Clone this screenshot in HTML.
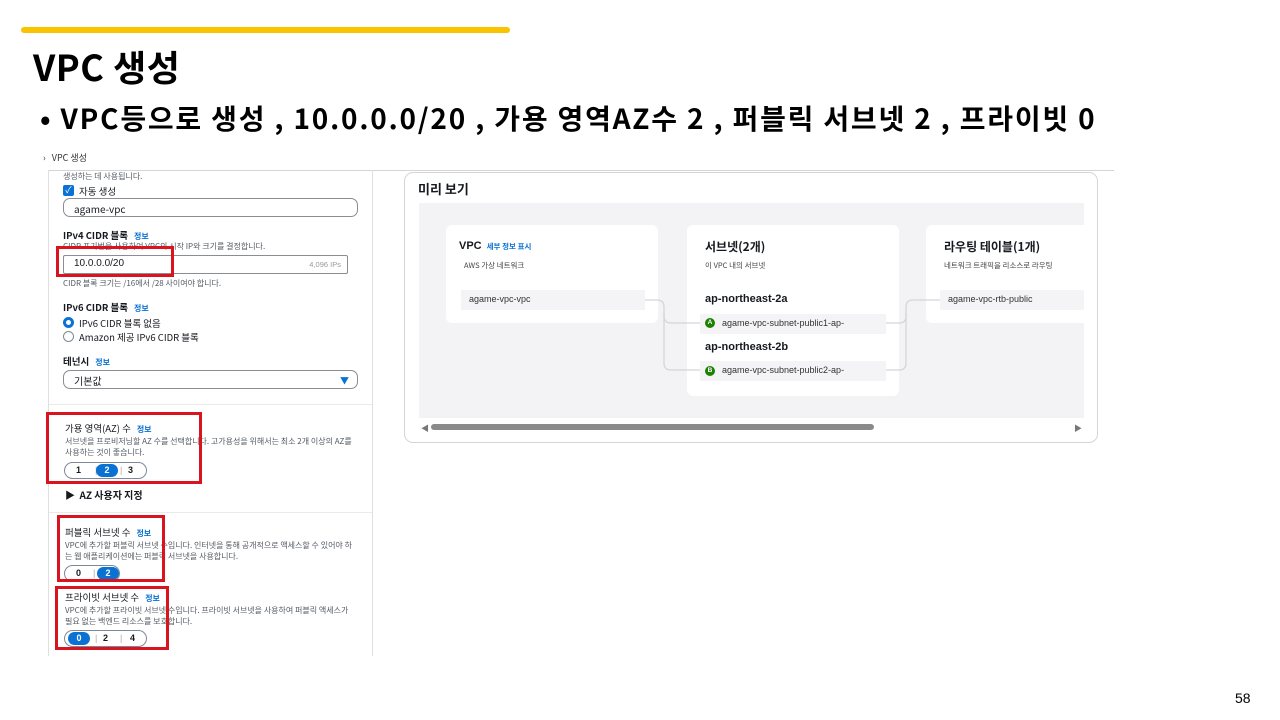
<!DOCTYPE html>
<html><head><meta charset="utf-8"><style>
*{margin:0;padding:0;box-sizing:border-box}
body{width:1280px;height:720px;background:#fff;position:relative;overflow:hidden;font-family:"Liberation Sans","Noto Sans CJK KR",sans-serif;color:#16191f}
.a{position:absolute;white-space:nowrap}
.k{font-family:"Noto Sans CJK KR","Liberation Sans",sans-serif}
.s{font-size:8px;color:#545b64}
.lbl{font-size:9.5px;font-weight:bold}
.info{color:#0972d3;font-size:8px;font-weight:bold;margin-left:6px}
.inp{position:absolute;border:1px solid #8c8c94;border-radius:7px;height:19px;font-size:10px;padding:2px 10px}
.red{position:absolute;border:3px solid #d9141e}
.seg{position:absolute;height:17px;border:1px solid #7d8998;border-radius:9px;font-size:9px;font-weight:bold}
.seg span{position:absolute;top:2px}
.on{position:absolute;top:1px;height:13px;background:#0972d3;border-radius:7px;color:#fff;font-size:9px;font-weight:bold;text-align:center;line-height:13px}
.card{position:absolute;background:#fff;border-radius:6px}
.row{position:absolute;background:#f4f4f6;height:20px;font-size:9px;color:#333;padding:4px 8px}
</style></head><body>
<div class="a" style="left:21px;top:27px;width:489px;height:6px;background:#f8c400;border-radius:3px"></div>
<div class="a k" style="left:33px;top:40px;font-size:36px;font-weight:bold;color:#000;letter-spacing:0.5px">VPC 생성</div>
<div class="a k" style="left:40px;top:98px;font-size:28px;font-weight:bold;color:#000;letter-spacing:1.8px">•&nbsp;VPC등으로 생성 , 10.0.0.0/20 , 가용 영역AZ수 2 , 퍼블릭 서브넷 2 , 프라이빗 0</div>

<div class="a k" style="left:43px;top:151px;font-size:9px;color:#333">›&nbsp;&nbsp; VPC 생성</div>
<div class="a" style="left:48px;top:170px;width:1066px;height:1px;background:#d5d5d5"></div>
<div class="a" style="left:48px;top:170px;width:1px;height:486px;background:#e0e0e0"></div>
<div class="a" style="left:372px;top:170px;width:1px;height:486px;background:#e0e0e0"></div>
<div class="a" style="left:49px;top:404px;width:323px;height:1px;background:#eaeaea"></div>
<div class="a" style="left:49px;top:512px;width:323px;height:1px;background:#eaeaea"></div>

<div class="a k s" style="left:63px;top:171px">생성하는 데 사용됩니다.</div>
<div class="a" style="left:63px;top:185px;width:11px;height:11px;background:#0972d3;border-radius:2px;color:#fff;font-size:9px;line-height:11px;text-align:center">✓</div>
<div class="a k" style="left:79px;top:184px;font-size:9.5px">자동 생성</div>
<div class="inp k" style="left:63px;top:198px;width:295px">agame-vpc</div>

<div class="a k lbl" style="left:63px;top:228px">IPv4 CIDR 블록<span class="info">정보</span></div>
<div class="a k s" style="left:63px;top:241px">CIDR 표기법을 사용하여 VPC의 시작 IP와 크기를 결정합니다.</div>
<div class="inp" style="left:63px;top:255px;width:285px;border-radius:2px">10.0.0.0/20<span style="position:absolute;right:6px;top:4px;font-size:7.5px;color:#999">4,096 IPs</span></div>
<div class="red" style="left:56px;top:246px;width:118px;height:31px"></div>
<div class="a k s" style="left:63px;top:278px">CIDR 블록 크기는 /16에서 /28 사이여야 합니다.</div>

<div class="a k lbl" style="left:63px;top:300px">IPv6 CIDR 블록<span class="info">정보</span></div>
<div class="a" style="left:63px;top:317px;width:11px;height:11px;border:3.5px solid #0972d3;border-radius:50%"></div>
<div class="a k" style="left:79px;top:316px;font-size:9.5px">IPv6 CIDR 블록 없음</div>
<div class="a" style="left:63px;top:331px;width:11px;height:11px;border:1px solid #7d8998;border-radius:50%"></div>
<div class="a k" style="left:79px;top:330px;font-size:9.5px">Amazon 제공 IPv6 CIDR 블록</div>

<div class="a k lbl" style="left:63px;top:354px">테넌시<span class="info">정보</span></div>
<div class="inp k" style="left:63px;top:370px;width:295px">기본값<span style="position:absolute;right:8px;top:3px;font-size:9px;color:#0972d3">▼</span></div>

<div class="a k lbl" style="left:65px;top:421px;font-weight:normal">가용 영역(AZ) 수<span class="info">정보</span></div>
<div class="a k s" style="left:65px;top:436px">서브넷을 프로비저닝할 AZ 수를 선택합니다. 고가용성을 위해서는 최소 2개 이상의 AZ를</div>
<div class="a k s" style="left:65px;top:447px">사용하는 것이 좋습니다.</div>
<div class="seg" style="left:64px;top:462px;width:83px"><span style="left:11px">1</span><span style="left:30px;color:#aaa;font-weight:normal">|</span><div class="on" style="left:31px;width:22px">2</div><span style="left:55px;color:#aaa;font-weight:normal">|</span><span style="left:63px">3</span></div>
<div class="red" style="left:46px;top:412px;width:156px;height:72px"></div>
<div class="a k" style="left:65px;top:487px;font-size:10px;font-weight:bold">▶&nbsp; AZ 사용자 지정</div>

<div class="a k lbl" style="left:65px;top:525px;font-weight:normal">퍼블릭 서브넷 수<span class="info">정보</span></div>
<div class="a k s" style="left:65px;top:540px">VPC에 추가할 퍼블릭 서브넷 수입니다. 인터넷을 통해 공개적으로 액세스할 수 있어야 하</div>
<div class="a k s" style="left:65px;top:551px">는 웹 애플리케이션에는 퍼블릭 서브넷을 사용합니다.</div>
<div class="seg" style="left:64px;top:565px;width:56px"><span style="left:11px">0</span><span style="left:28px;color:#aaa;font-weight:normal">|</span><div class="on" style="left:32px;width:22px">2</div></div>
<div class="red" style="left:57px;top:515px;width:108px;height:67px"></div>

<div class="a k lbl" style="left:65px;top:590px;font-weight:normal">프라이빗 서브넷 수<span class="info">정보</span></div>
<div class="a k s" style="left:65px;top:605px">VPC에 추가할 프라이빗 서브넷 수입니다. 프라이빗 서브넷을 사용하여 퍼블릭 액세스가</div>
<div class="a k s" style="left:65px;top:616px">필요 없는 백엔드 리소스를 보호합니다.</div>
<div class="seg" style="left:64px;top:630px;width:83px"><div class="on" style="left:3px;width:22px">0</div><span style="left:30px;color:#aaa;font-weight:normal">|</span><span style="left:38px">2</span><span style="left:55px;color:#aaa;font-weight:normal">|</span><span style="left:65px">4</span></div>
<div class="red" style="left:55px;top:586px;width:114px;height:64px"></div>

<!-- preview -->
<div class="a" style="left:404px;top:172px;width:694px;height:271px;border:1px solid #d5d5d5;border-radius:9px"></div>
<div class="a k" style="left:418px;top:179px;font-size:13px;font-weight:bold">미리 보기</div>
<div class="a" style="left:419px;top:203px;width:665px;height:215px;background:#f3f3f5"></div>
<div class="card" style="left:446px;top:225px;width:212px;height:98px"></div>
<div class="card" style="left:687px;top:225px;width:212px;height:171px"></div>
<div class="card" style="left:926px;top:225px;width:158px;height:98px;border-radius:6px 0 0 6px"></div>
<svg class="a" style="left:419px;top:203px" width="665" height="215"><g fill="none" stroke="#d5d5da" stroke-width="1.3"><path d="M226 97 H238 Q245 97 245 104 V113 Q245 120 252 120 H281"/><path d="M245 110 V160 Q245 167 252 167 H281"/><path d="M467 120 H480 Q487 120 487 113 V104 Q487 97 494 97 H521"/><path d="M467 167 H480 Q487 167 487 160 V110"/></g></svg>

<div class="a" style="left:459px;top:240px;font-size:11px;font-weight:bold">VPC<span class="k" style="font-size:7.5px;color:#0972d3;margin-left:5px">세부 정보 표시</span></div>
<div class="a k" style="left:464px;top:260px;font-size:7.5px;color:#444">AWS 가상 네트워크</div>
<div class="row" style="left:461px;top:290px;width:184px">agame-vpc-vpc</div>

<div class="a k" style="left:705px;top:238px;font-size:12px;font-weight:bold">서브넷(2개)</div>
<div class="a k" style="left:705px;top:260px;font-size:7.5px;color:#444">이 VPC 내의 서브넷</div>
<div class="a" style="left:705px;top:293px;font-size:11px;font-weight:bold">ap-northeast-2a</div>
<div class="row" style="left:700px;top:314px;width:186px;padding-left:22px">agame-vpc-subnet-public1-ap-</div>
<div class="a" style="left:705px;top:318px;width:10px;height:10px;border-radius:50%;background:#1d8102;color:#fff;font-size:6.5px;font-weight:bold;text-align:center;line-height:10px">A</div>
<div class="a" style="left:705px;top:341px;font-size:11px;font-weight:bold">ap-northeast-2b</div>
<div class="row" style="left:700px;top:361px;width:186px;padding-left:22px">agame-vpc-subnet-public2-ap-</div>
<div class="a" style="left:705px;top:366px;width:10px;height:10px;border-radius:50%;background:#1d8102;color:#fff;font-size:6.5px;font-weight:bold;text-align:center;line-height:10px">B</div>

<div class="a k" style="left:944px;top:238px;font-size:12px;font-weight:bold">라우팅 테이블(1개)</div>
<div class="a k" style="left:944px;top:260px;font-size:7.5px;color:#444">네트워크 트래픽을 리소스로 라우팅</div>
<div class="row" style="left:940px;top:290px;width:144px">agame-vpc-rtb-public</div>

<div class="a" style="left:421px;top:423px;font-size:8px;color:#777">◀</div>
<div class="a" style="left:431px;top:424px;width:443px;height:6px;background:#8a8a8a;border-radius:3px"></div>
<div class="a" style="left:1074px;top:423px;font-size:8px;color:#777">▶</div>

<div class="a" style="left:1235px;top:690px;font-size:14px;color:#000">58</div>
</body></html>
